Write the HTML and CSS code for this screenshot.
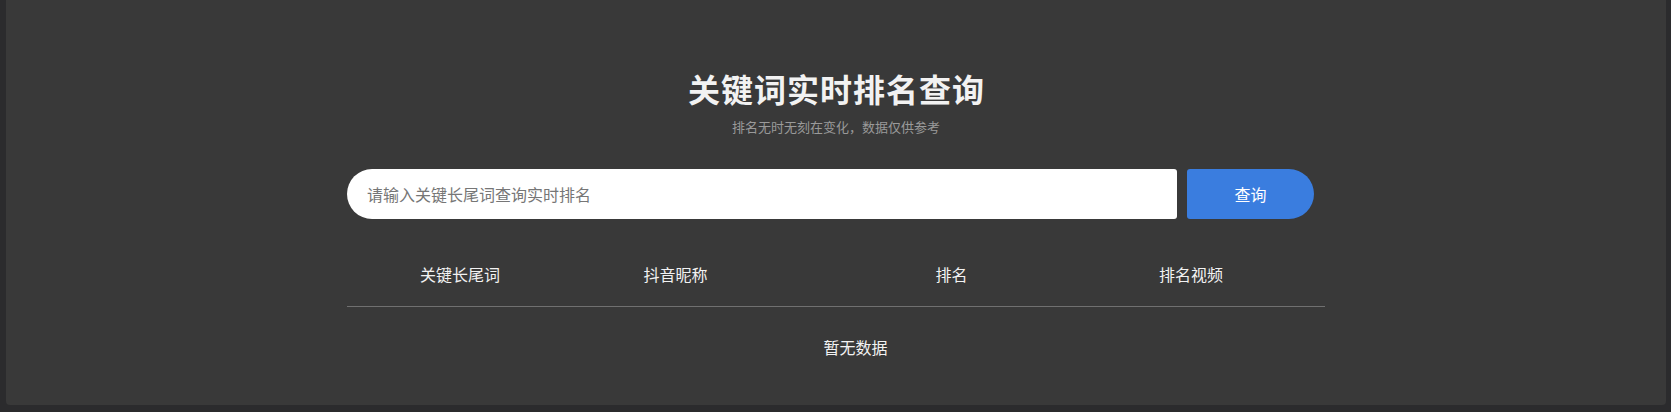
FILE: index.html
```html
<!DOCTYPE html>
<html lang="zh-CN">
<head>
<meta charset="utf-8">
<title>关键词实时排名查询</title>
<link rel="stylesheet" href="styles.css">
</head>
<body>
<div class="panel">
  <div class="wrap">
    <h1 class="title">关键词实时排名查询</h1>
    <p class="subtitle">排名无时无刻在变化，数据仅供参考</p>
    <form class="search" onsubmit="return false">
      <input class="search-input" type="text" placeholder="请输入关键长尾词查询实时排名">
      <button class="search-btn" type="button">查询</button>
    </form>
    <div class="table">
      <div class="thead">
        <div class="th c1">关键长尾词</div>
        <div class="th c2">抖音昵称</div>
        <div class="th c3">排名</div>
        <div class="th c4">排名视频</div>
      </div>
      <div class="empty">暂无数据</div>
    </div>
  </div>
</div>
</body>
</html>
```
FILE: styles.css
```css
* { box-sizing: border-box; }
html, body { margin: 0; padding: 0; }
body {
  background: #2b2b2d;
  font-family: "Noto Sans CJK SC", "Noto Sans", "Liberation Sans", sans-serif;
  height: 412px;
  overflow: hidden;
}
.panel {
  margin: 0 5px 0 6px;
  height: 405px;
  background: #393939;
  border-radius: 0 0 4px 4px;
  display: flex;
  justify-content: center;
}
.wrap {
  width: 978px;
  display: flex;
  flex-direction: column;
  align-items: center;
}
.title {
  margin: 68px 0 0;
  font-size: 32px;
  line-height: 40px;
  font-weight: 700;
  color: #f2f2f2;
  letter-spacing: 1px;
  padding-left: 1px;
}
.subtitle {
  margin: 9px 0 0;
  font-size: 13px;
  line-height: 20px;
  color: #9a9a9a;
}
.search {
  margin: 32px 0 0;
  width: 100%;
  display: flex;
  height: 50px;
}
.search-input {
  width: 830px;
  height: 50px;
  border: 0;
  outline: none;
  background: #fff;
  border-radius: 25px 3px 3px 25px;
  padding: 0 0 0 20px;
  font-family: inherit;
  font-size: 16px;
  color: #333;
}
.search-input::placeholder { color: #767676; }
.search-btn {
  margin-left: 10px;
  width: 127px;
  height: 50px;
  border: 0;
  background: #3a7ddf;
  color: #fff;
  border-radius: 3px 25px 25px 3px;
  font-family: inherit;
  font-size: 16px;
  padding: 0;
}
.table { width: 100%; margin-top: 23px; }
.thead {
  display: grid;
  grid-template-columns: 226px 205px 347px 132px;
  height: 65px;
  border-bottom: 1px solid #707070;
}
.th {
  text-align: center;
  font-size: 16px;
  line-height: 64px;
  color: #f2f2f2;
}
.empty {
  height: 80px;
  line-height: 80px;
  text-align: center;
  padding-left: 39px;
  font-size: 16px;
  color: #f2f2f2;
}
```
